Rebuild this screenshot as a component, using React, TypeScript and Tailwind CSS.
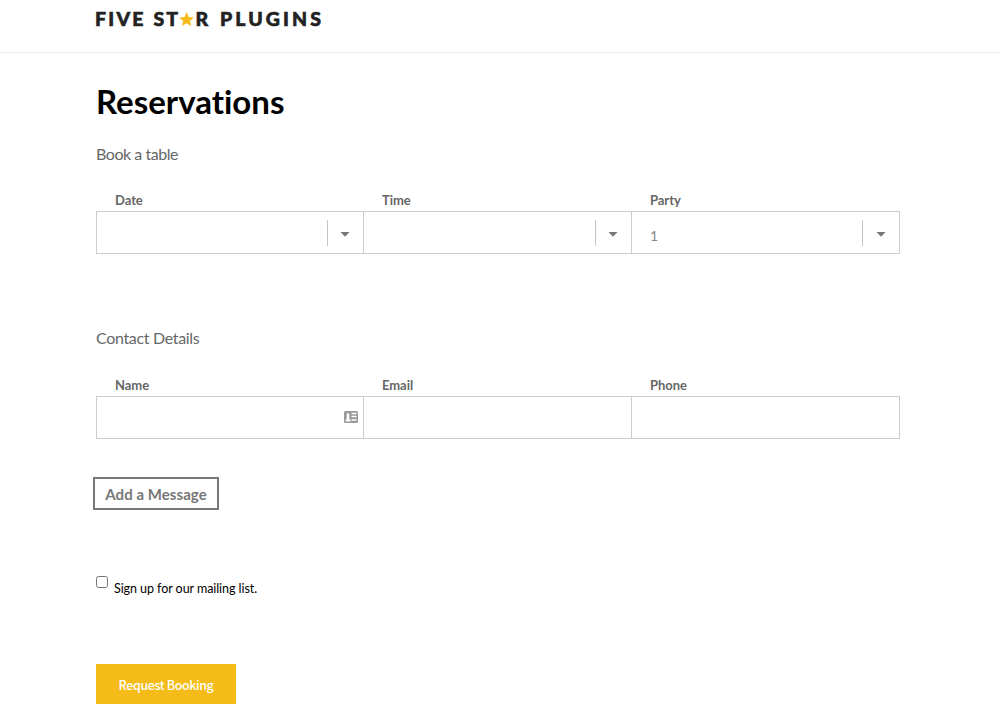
import React from 'react'

function Caret({ wide }: { wide?: boolean }) {
  return (
    <div className={`flex items-center justify-center h-[26px] mt-px border-l border-[#c4c4c4] ${wide ? 'w-[37px]' : 'w-9'}`}>
      <svg className="w-[10px] h-[5px] mt-[2px] -ml-px" viewBox="0 0 10 5"><path d="M0.5 0h9L5 4.8z" fill="#777" /></svg>
    </div>
  )
}

function Field({ label, value, width, last, children }: { label: string, value?: string, width: string, last?: boolean, children?: React.ReactNode }) {
  return (
    <div className={width}>
      <label className="block h-[18px] pl-[19px] text-[13px] leading-[18px] font-bold text-[#666] tracking-[-0.05px]">{label}</label>
      <div className={`flex items-center h-[43px] mt-[2px] border-y border-l border-[#ccc] ${last ? 'border-r' : ''}`}>
        <span className="flex-1 pl-[18px] pt-[7px] text-[14px] leading-5 text-[#888]">{value}</span>
        {children}
      </div>
    </div>
  )
}

export default function App() {
  return (
    <div className="h-[704px] w-full overflow-hidden bg-white font-['Lato',sans-serif]">
      {/* top bar */}
      <header className="h-[53px] border-b border-[#eee] pl-[95px] pt-[6px]">
        <svg width="230" height="26" viewBox="0 0 230 26" role="img" aria-label="Five Star Plugins">
          <g fill="#222" stroke="#222" strokeWidth="0.6" fontFamily="Lato, sans-serif" fontWeight="900" fontSize="19.5">
            <text x="0" y="20" textLength="48.5">FIVE</text>
            <text x="58.5" y="20" textLength="24.5">ST</text>
            <text x="100.5" y="20">R</text>
            <text x="125" y="20" textLength="101">PLUGINS</text>
          </g>
          <path d="M91.6 6l2.1 4.9 5.3.5-4 3.5 1.2 5.2-4.6-2.8-4.6 2.8 1.2-5.2-4-3.5 5.3-.5z" fill="#f5bb18" />
        </svg>
      </header>

      <main className="pl-24">
        <h1 className="pt-7 text-[33px] leading-10 font-bold text-black [font-variant-ligatures:none]">Reservations</h1>

        {/* booking */}
        <section className="pt-[21px]">
          <h2 className="text-[16px] leading-6 text-[#666] tracking-[-0.45px]">Book a table</h2>
          <div className="flex mt-[25px]">
            <Field label="Date" width="w-[267px]"><Caret /></Field>
            <Field label="Time" width="w-[268px]"><Caret /></Field>
            <Field label="Party" value="1" width="w-[269px]" last><Caret wide /></Field>
          </div>
        </section>

        {/* contact details */}
        <section className="pt-[72px]">
          <h2 className="text-[16px] leading-6 text-[#666] tracking-[-0.33px]">Contact Details</h2>
          <div className="flex mt-[26px]">
            <Field label="Name" width="w-[267px]">
              <svg className="w-[14px] h-3 mr-[5px] -mt-px" viewBox="0 0 14 12">
                <rect width="14" height="12" rx="1.5" fill="#999" />
                <path d="M1.5 10.5V8.8l1.2-.8V3.2L4 1.8l1.3 1.4V8l1.2.8v1.7z" fill="#fff" />
                <path d="M7.5 2.5h5M7.5 5.5h5M7.5 9h5" stroke="#fff" strokeWidth="1.3" />
              </svg>
            </Field>
            <Field label="Email" width="w-[268px]" />
            <Field label="Phone" width="w-[269px]" last />
          </div>
          <button type="button" className="block w-[126px] h-[33px] mt-[38px] -ml-[3px] border-2 border-[#777] text-[15px] leading-[30px] font-bold text-[#777] tracking-[0.06px]">Add a Message</button>
        </section>

        {/* mailing list */}
        <label className="flex items-start mt-[66px] h-6">
          <input type="checkbox" className="appearance-none w-3 h-3 border border-[#777] rounded-[2.5px] bg-white" />
          <span className="pl-[6px] pt-[3px] text-[12.5px] leading-5 text-black tracking-[-0.06px]">Sign up for our mailing list.</span>
        </label>

        <button type="button" className="block w-[140px] h-10 mt-[64px] bg-[#f5bb18] text-[12.5px] leading-[42px] tracking-[-0.4px] font-['Noto_Sans_CJK_SC',sans-serif] font-medium text-white">Request Booking</button>
      </main>
    </div>
  )
}
